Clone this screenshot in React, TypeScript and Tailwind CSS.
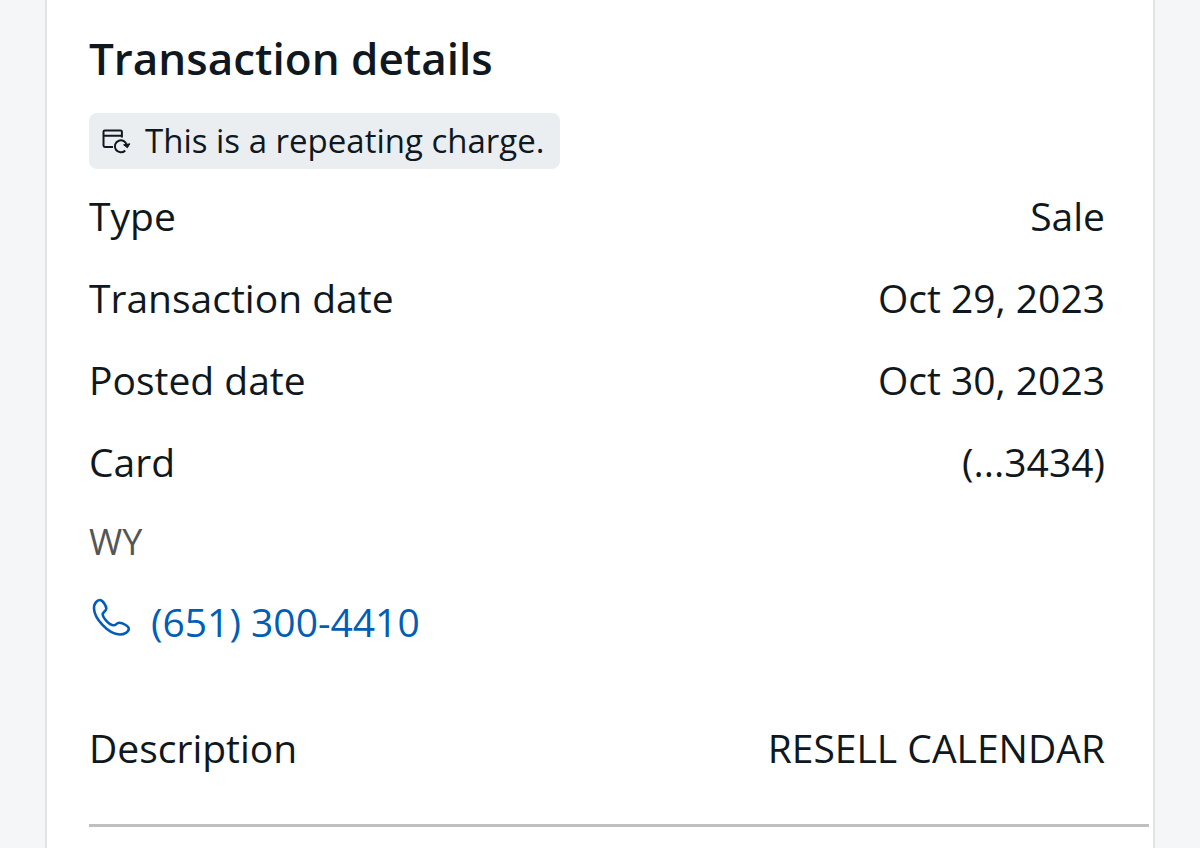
const details = [
  { label: "Type", value: "Sale" },
  { label: "Transaction date", value: "Oct 29, 2023" },
  { label: "Posted date", value: "Oct 30, 2023" },
  { label: "Card", value: "(...3434)" },
];

function RepeatIcon() {
  return (
    <svg viewBox="0 0 30 26" className="h-[26px] w-[30px] shrink-0" fill="none" stroke="currentColor" strokeWidth="2" aria-hidden="true">
      <path d="M12 19H3.9a1.4 1.4 0 0 1-1.4-1.4V3.8a1.4 1.4 0 0 1 1.4-1.4h15.6a1.4 1.4 0 0 1 1.4 1.4v5.8M2.5 7.8h18.4" />
      <path d="M25.8 17.5a6 6 0 1 0-1.6 5" />
      <path d="M22.6 16.8l3.8 3 2.4-4z" fill="currentColor" strokeWidth="1" />
    </svg>
  );
}

function PhoneIcon() {
  return (
    <svg viewBox="-1 -3 42 42" className="size-[42px] shrink-0" fill="none" stroke="currentColor" strokeWidth="2.6" strokeLinejoin="round" aria-hidden="true">
      <path d="M10 3C12.5 3 16.3 8.8 16.3 11.4C16.3 14.2 12.6 14.8 12.7 17.5C12.8 20.6 19.4 28.3 23.6 28.3C26.4 28.3 26.2 25.8 29.3 25.8C32.5 25.8 38.8 29 38.8 31.8C38.8 35 34.4 37.5 29.8 37.5C18 37.5 4 20.8 4 11.3C4 6.6 6.8 3 10 3Z" />
    </svg>
  );
}

function DetailRow({ label, value }: { label: string; value: string }) {
  return (
    <div className="flex items-center justify-between">
      <dt>{label}</dt>
      <dd>{value}</dd>
    </div>
  );
}

export default function App() {
  return (
    <div className="min-h-screen bg-[#f4f6f8] px-[45px] font-['Open_Sans','Noto_Sans',sans-serif] text-[#0f1820]">
      <main className="min-h-screen border-x-2 border-[#e1e3e6] bg-white pt-7 pl-[42px]">
        <h1 className="text-[44px] leading-[60px] font-semibold">Transaction details</h1>
        <p className="mt-[25px] flex h-14 w-fit items-center gap-[14px] rounded-lg bg-[#ebeef1] pr-4 pl-3 text-[33px]">
          <RepeatIcon />
          This is a repeating charge.
        </p>
        <dl className="mt-[19px] space-y-[26px] pr-12 text-[39px] leading-[56px]">
          {details.map((detail) => (
            <DetailRow key={detail.label} label={detail.label} value={detail.value} />
          ))}
        </dl>
        <p className="mt-6 text-[36px] leading-[56px] text-[#555]">WY</p>
        <a href="tel:+16513004410" className="mt-6 flex w-fit items-start gap-5 text-[39px] leading-[56px] text-[#005eb8]">
          <PhoneIcon />
          (651) 300-4410
        </a>
        <dl className="mt-[70px] pr-12 text-[39px] leading-[56px]">
          <DetailRow label="Description" value="RESELL CALENDAR" />
        </dl>
        <hr className="mt-12 mr-1 border-t-[3px] border-[#c0c0c0]" />
      </main>
    </div>
  );
}
